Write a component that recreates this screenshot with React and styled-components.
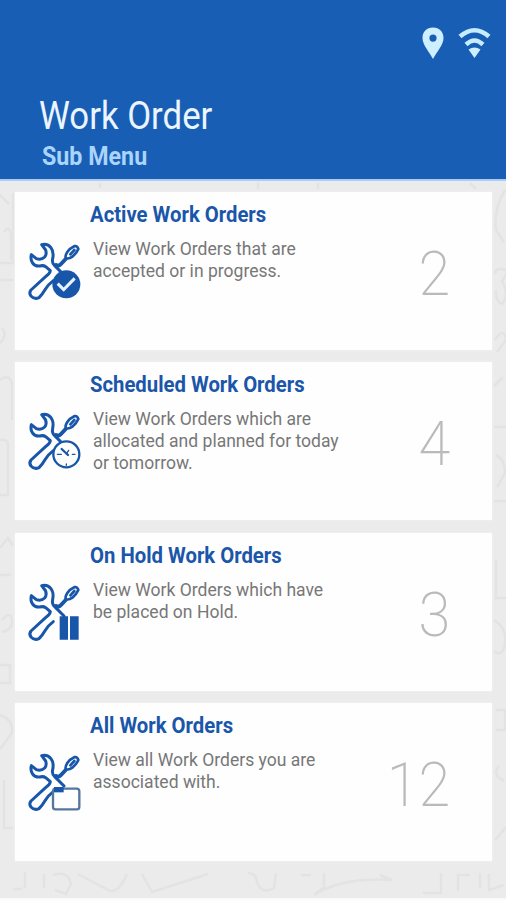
import React from 'react';
import styled, { createGlobalStyle } from 'styled-components';

const GlobalStyle = createGlobalStyle`
  body {
    margin: 0;
    background: #ebebeb;
    font-family: Roboto, "Liberation Sans", sans-serif;
  }
`;
const Page = styled.div`
  position: relative;
  width: 506px;
  height: 900px;
  overflow: hidden;
  background: #ebebeb;
  border-bottom: 2px solid #fafafa;
  box-sizing: border-box;
`;
const Doodles = styled.svg`
  position: absolute;
  left: 0;
  top: 0;
  fill: none;
  stroke: #e3e3e3;
  stroke-width: 2.5;
`;
const Header = styled.header`
  position: relative;
  display: flex;
  flex-direction: column;
  height: 181px;
  box-sizing: border-box;
  padding: 26px 15px 0 39px;
  background: #195eb5;
  border-bottom: 2px solid #a9cdf5;
`;
const StatusIcons = styled.div`
  display: flex;
  justify-content: flex-end;
  gap: 13px;
  height: 36px;
`;
const Line = styled.span`
  display: block;
  width: max-content;
  white-space: nowrap;
  transform: scaleX(${({ $squeeze }) => $squeeze || 1});
  transform-origin: ${({ $right }) => ($right ? 'right' : 'left')} center;
`;
const Title = styled.h1`
  margin: 32px 0 0;
  color: #eaf5ff;
  font-weight: 400;
  font-size: 38px;
  line-height: 44px;
`;
const SubTitle = styled.h2`
  margin: 4px 0 0 3px;
  color: #a9d4fb;
  font-weight: 700;
  font-size: 25px;
  line-height: 30px;
`;
const List = styled.main`
  position: relative;
  display: flex;
  flex-direction: column;
  gap: 12.3px;
  padding: 11px 14px 0 15px;
`;
const Card = styled.section`
  display: grid;
  grid-template-columns: 75px minmax(0, 1fr) 100px;
  height: 158px;
  box-sizing: border-box;
  padding-right: 42px;
  background: #fefefe;
  box-shadow: 0 0 2px #f6f6f6;
`;
const CardIcon = styled.svg`
  margin: 38px 0 0 5px;
  fill: none;
  stroke: #1756a8;
  stroke-width: 9;
  stroke-linejoin: round;
  stroke-linecap: round;
`;
const CardTitle = styled.h3`
  margin: 10px 0 0;
  color: #1a56a9;
  font-weight: 700;
  font-size: 22px;
  line-height: 26px;
`;
const CardText = styled.p`
  margin: 10px 0 0 3px;
  color: #777;
  font-weight: 400;
  font-size: 19px;
  line-height: 22px;
`;
const Count = styled.div`
  display: flex;
  justify-content: flex-end;
  padding-top: 45px;
  color: #bababa;
  font-weight: 200;
  font-size: 62px;
  line-height: 74px;
`;

const orders = [
  {
    id: 'active',
    title: 'Active Work Orders',
    lines: ['View Work Orders that are', 'accepted or in progress.'],
    count: 2
  },
  {
    id: 'scheduled',
    title: 'Scheduled Work Orders',
    lines: ['View Work Orders which are', 'allocated and planned for today', 'or tomorrow.'],
    count: 4
  },
  {
    id: 'hold',
    title: 'On Hold Work Orders',
    lines: ['View Work Orders which have', 'be placed on Hold.'],
    count: 3
  },
  {
    id: 'all',
    title: 'All Work Orders',
    lines: ['View all Work Orders you are', 'associated with.'],
    count: 12
  }
];

function Badge({ type }) {
  switch (type) {
    case 'active':
      return (
        <g>
          <circle cx="139" cy="163" r="42" fill="#1756a8" stroke="none" />
          <path d="M113 161l18 18 33-34" stroke="#e6f3ff" strokeWidth="9" strokeLinecap="butt" strokeLinejoin="miter" />
        </g>
      );
    case 'scheduled':
      return (
        <g>
          <circle cx="139" cy="163" r="39" fill="#fefefe" strokeWidth="7" />
          <path d="M125 147l19 18" strokeWidth="7" />
          <path d="M146 151l-7 11M112 163h12M157 163h8M139 196v-4" strokeWidth="4" />
        </g>
      );
    case 'hold':
      return <path d="M119 136h25v70h-25zM150 136h26v70h-26z" fill="#1756a8" stroke="none" />;
    default:
      return (
        <g>
          <rect x="99" y="143" width="79" height="62" rx="8" fill="#fefefe" stroke="#55779f" strokeWidth="7" />
          <path d="M102 138h29v16h-29z" fill="#1756a8" stroke="none" />
        </g>
      );
  }
}

function ToolsIcon({ type }) {
  return (
    <CardIcon width="70" height="80" viewBox="0 0 210 240">
      <path d="M132 135L104 107Q95 99 98 86C104 60 89 38 65 44L77 60Q81 73 74 81Q64 91 49 86L34 74C29 95 42 110 59 108Q70 105 77 110L91 122Q90 130 80 137L33 180Q26 189 33 198Q43 209 57 203Q68 192 76 178Q84 164 100 152" />
      <path d="M108 105Q116 110 123 102L137 87" strokeWidth="12" />
      <path d="M138 85Q134 79 142 66Q149 55 164 48Q172 47 175 57Q170 69 157 80Q148 87 138 85zM151 73l12-13" strokeWidth="8" />
      <Badge type={type} />
    </CardIcon>
  );
}

function Background() {
  return (
    <Doodles width="506" height="900">
      <path d="M0 263h13v-70M0 280h14M4 232q5-8 7 3v25M0 195l9 9M0 343q8-8 2-15M0 380q10-7 12 4v36M0 440h4q4 0 4 5v50H0M0 548l8-10 5 8M0 575h11M2 620q9-10 10 0t-10 12M0 665h10v18H0M0 715q13 4 12 18l-12 16M4 780v48h9" />
      <path d="M505 190q-12 20-9 40l8 12M496 274q-3-5 6-5t0 12q8 14 0 23-7-4-6-14M495 340q9-14 11 0l-9 12M494 386l9-9M494 427h12M496 455q9 4 9 18l-8 14M494 501h12M496 560v38h10M494 620q13 8 11 23t-11 8M496 710h9v20h-9M499 766q-8 9 5 15M495 840l11-13" />
      <path d="M100 183v5M258 182v7M318 183v6M470 183l6 6" />
      <path d="M25 872v16M13 889h9M44 874v14M53 875q15-5 18 9l-5 10-11-4M78 874l30 16q10 5 19-16M142 874l10 18 56-18M248 873q8 0 9 9 4 13 17 6l2-15M301 875h10M324 873v14l-10 8q28-18 78-15l-12-5M423 893h18v-20M458 891v-16h12M480 888v-15M489 874v16l15-5" />
    </Doodles>
  );
}

export default function App() {
  return (
    <>
      <GlobalStyle />
      <Page>
        <Background />
        <Header>
          <StatusIcons>
            <svg width="24" height="35" viewBox="0 0 24 35">
              <path d="M12 1.500C5.500 1.500 1.500 6 1.500 12c0 7 7 14 10.500 21C15.500 26 22.500 19 22.500 12c0-6-4-10.500-10.500-10.500zm0 7a3.500 3.500 0 110 7.200 3.500 3.500 0 010-7.200z" fill="#cdefff" />
            </svg>
            <svg width="33" height="35" viewBox="0 0 33 35">
              <path d="M2 10.500Q16.500-2 31 10.500M8 18.500Q16.500 10.500 25 18.500" fill="none" stroke="#c5edff" strokeWidth="4.500" />
              <path d="M10.500 23.500q6-4 12 0L16.500 32z" fill="#cdefff" />
            </svg>
          </StatusIcons>
          <Title><Line $squeeze={0.915}>Work Order</Line></Title>
          <SubTitle><Line $squeeze={0.93}>Sub Menu</Line></SubTitle>
        </Header>
        <List>
          {orders.map((order) => (
            <Card key={order.id}>
              <ToolsIcon type={order.id} />
              <div>
                <CardTitle><Line $squeeze={0.922}>{order.title}</Line></CardTitle>
                <CardText>
                  {order.lines.map((line) => <Line key={line} $squeeze={0.923}>{line}</Line>)}
                </CardText>
              </div>
              <Count><Line $squeeze={0.93} $right>{order.count}</Line></Count>
            </Card>
          ))}
        </List>
      </Page>
    </>
  );
}
